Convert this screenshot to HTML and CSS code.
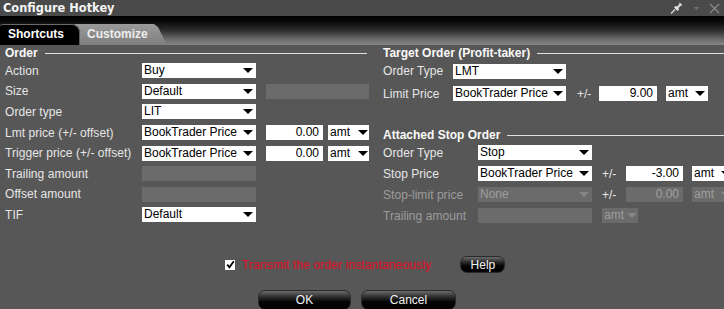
FILE: index.html
```html
<!DOCTYPE html>
<html>
<head>
<meta charset="utf-8">
<link rel="stylesheet" href="styles.css">
</head>
<body>
<div class="win">
  <div class="titlebar">
    <span class="title">Configure Hotkey</span>
    <div class="ctrls">
      <svg class="ic-pin" width="13" height="12" viewBox="0 0 13 12"><path d="M1 11.5 L5 7.5" stroke="#d8d8d8" stroke-width="1.4" fill="none"/><path d="M4 5.5 L7.5 9 L9 7.5 L8.5 6 L11 3.5 L12 3.8 L12.4 3.2 L9.8 0.6 L9.2 1 L9.5 2 L7 4.5 L5.5 4 Z" fill="#e0e0e0"/></svg>
      <svg class="ic-caret" width="7" height="5" viewBox="0 0 7 5"><path d="M0.5 1 L6.5 1 L3.5 4 Z" fill="#6e6e6e"/></svg>
      <svg class="ic-close" width="11" height="11" viewBox="0 0 11 11"><path d="M1 1 L10 10 M10 1 L1 10" stroke="#8a8a8a" stroke-width="1.3" fill="none"/></svg>
    </div>
  </div>
  <div class="tabband">
    <div class="tab tab-active">Shortcuts</div>
    <div class="tab tab-inactive">Customize</div>
  </div>
  <div class="main">
    <div class="col-left">
      <div class="heading"><span>Order</span><i class="rule"></i></div>
      <div class="grid-left">
        <div class="lbl">Action</div><div class="sel">Buy</div><div></div>
        <div class="lbl">Size</div><div class="sel">Default</div><div class="extra"><div class="dis w-size"></div></div>
        <div class="lbl">Order type</div><div class="sel">LIT</div><div></div>
        <div class="lbl">Lmt price (+/- offset)</div><div class="sel">BookTrader Price</div><div class="extra"><div class="num w-num">0.00</div><div class="sel w-amt">amt</div></div>
        <div class="lbl">Trigger price (+/- offset)</div><div class="sel">BookTrader Price</div><div class="extra"><div class="num w-num">0.00</div><div class="sel w-amt">amt</div></div>
        <div class="lbl">Trailing amount</div><div class="dis"></div><div></div>
        <div class="lbl">Offset amount</div><div class="dis"></div><div></div>
        <div class="lbl">TIF</div><div class="sel">Default</div><div></div>
      </div>
    </div>
    <div class="col-right">
      <div class="heading"><span>Target Order (Profit-taker)</span><i class="rule"></i></div>
      <div class="grid-target">
        <div class="lbl">Order Type</div><div class="sel">LMT</div><div></div><div></div><div></div>
        <div class="lbl">Limit Price</div><div class="sel">BookTrader Price</div><div class="pm pm-t">+/-</div><div class="num">9.00</div><div class="sel w-amt2">amt</div>
      </div>
      <div class="heading heading-stop"><span>Attached Stop Order</span><i class="rule"></i></div>
      <div class="grid-stop">
        <div class="lbl">Order Type</div><div class="sel">Stop</div><div></div><div></div><div></div>
        <div class="lbl">Stop Price</div><div class="sel">BookTrader Price</div><div class="pm">+/-</div><div class="num">-3.00</div><div class="sel w-amt2">amt</div>
        <div class="lbl lbl-dis">Stop-limit price</div><div class="sel sel-dis">None</div><div class="pm">+/-</div><div class="num num-dis">0.00</div><div class="sel sel-dis w-amt2">amt</div>
        <div class="lbl lbl-dis">Trailing amount</div><div class="dis"></div><div class="span2"><div class="sel sel-dis w-amt3">amt</div></div>
      </div>
    </div>
  </div>
  <div class="checkrow">
    <span class="chk"><svg width="9" height="9" viewBox="0 0 9 9"><path d="M1.2 4.6 L3.4 7.2 L7.8 1.2" stroke="#000" stroke-width="1.8" fill="none"/></svg></span>
    <span class="transmit">Transmit the order instantaneously</span>
    <button class="btn btn-help">Help</button>
  </div>
  <div class="btnrow">
    <button class="btn btn-ok">OK</button>
    <button class="btn btn-cancel">Cancel</button>
  </div>
</div>
</body>
</html>
```

FILE: styles.css
```css
* { box-sizing: border-box; }
html, body { margin: 0; padding: 0; }
body {
  width: 724px;
  height: 309px;
  overflow: hidden;
  background: #575757;
  font-family: "Liberation Sans", Arial, sans-serif;
  font-size: 12px;
  color: #e8e8e8;
}
.win { width: 724px; height: 309px; overflow: hidden; background: #575757; }

.titlebar {
  height: 16px;
  background: #4a4a4a;
  display: flex;
  align-items: center;
  justify-content: space-between;
  padding: 0 4px 0 3px;
}
.title {
  font-family: "DejaVu Sans", Verdana, sans-serif;
  font-weight: bold;
  font-size: 11.4px;
  color: #f4f4f4;
}
.ctrls { display: flex; align-items: center; gap: 0; }
.ic-pin { margin-right: 10px; }
.ic-caret { margin-right: 9px; }

.tabband {
  height: 29px;
  background: linear-gradient(to bottom, #000 0%, #0a0a0a 20%, #2e2e2e 50%, #6a6a6a 80%, #868686 100%);
  display: flex;
  align-items: flex-end;
}
.tab {
  height: 21px;
  font-weight: bold;
  font-size: 12px;
  line-height: 20px;
}
.tab-active {
  width: 80px;
  background: #000;
  color: #fff;
  padding-left: 8px;
  border-radius: 3px 8px 0 0;
  border-top: 1px solid #6a6a6a;
  border-right: 1px solid #5a5a5a;
  line-height: 19px;
  z-index: 2;
}
.tab-inactive {
  width: 93px;
  margin-left: -6px;
  padding-left: 13px;
  background: linear-gradient(to bottom, #9a9a9a, #7e7e7e);
  color: #eeeeee;
  clip-path: polygon(0 0, 80px 0, 84px 3px, 100% 100%, 0 100%);
  z-index: 1;
}

.main {
  display: flex;
  padding: 1px 0 0 5px;
  height: 180px;
}
.col-left { width: 364px; }
.col-right { flex: 1; margin-left: 14px; }

.heading {
  height: 14px;
  display: flex;
  align-items: center;
  font-weight: bold;
  color: #fafafa;
}
.rule {
  flex: 1;
  height: 1px;
  background: #e0e0e0;
  margin-left: 7px;
  margin-top: 1px;
}
.col-left .rule { margin-right: 2px; }
.heading-stop { margin-top: 23px; }

.grid-left {
  display: grid;
  grid-template-columns: 137px 114px 113px;
  grid-auto-rows: 20.6px;
  align-items: center;
  padding-top: 0.5px;
}
.grid-target {
  display: grid;
  grid-template-columns: 70px 113px 33px 58px 51px;
  grid-auto-rows: 22.5px;
  align-items: center;
}
.grid-stop {
  display: grid;
  grid-template-columns: 95px 114px 34px 57px 51px;
  grid-auto-rows: 21px;
  align-items: center;
}

.lbl { white-space: nowrap; color: #e6e6e6; letter-spacing: 0.05px; }
.lbl-dis { color: #9c9c9c; }

.sel {
  height: 15px;
  background: #fff;
  color: #000;
  display: flex;
  align-items: center;
  justify-content: space-between;
  padding: 0 3px 0 2px;
  white-space: nowrap;
  line-height: 15px;
}
.sel::after {
  content: "";
  flex: none;
  width: 0;
  height: 0;
  border-left: 5px solid transparent;
  border-right: 5px solid transparent;
  border-top: 5px solid #000;
}
.sel-dis { background: #6b6b6b; color: #9e9e9e; }
.sel-dis::after { border-top-color: #858585; }

.dis { height: 15px; background: #6b6b6b; }
.num {
  height: 15px;
  background: #fff;
  color: #000;
  text-align: right;
  padding-right: 4px;
  line-height: 15px;
}
.num-dis { background: #6b6b6b; color: #a2a2a2; }

.extra { display: flex; gap: 5px; margin-left: 10px; }
.w-size { width: 103px; }
.w-num { width: 57px; }
.w-amt { width: 41px; padding-right: 1px; }
.w-amt2 { width: 42px; margin-left: 9px; }
.w-amt3 { width: 36px; margin-left: 10px; padding-right: 1px; }
.span2 { grid-column: span 2; }

.pm { padding-left: 10px; color: #e6e6e6; }
.pm-t { padding-left: 11px; }

.checkrow {
  display: flex;
  align-items: center;
  height: 17px;
  margin-top: 31px;
  padding-left: 225px;
}
.chk {
  width: 10px;
  height: 10px;
  background: #fff;
  display: flex;
  align-items: center;
  justify-content: center;
  margin-right: 7px;
}
.transmit {
  color: #d0182c;
  letter-spacing: 0.15px;
  text-shadow: 0 0 1px rgba(210, 30, 50, 0.6);
}
.btn {
  font-family: "Liberation Sans", Arial, sans-serif;
  font-size: 12px;
  color: #f2f2f2;
  background: linear-gradient(to bottom, #6a6a6a 0%, #2a2a2a 35%, #050505 60%, #000 100%);
  border: 1px solid #2a2a2a;
  border-radius: 7px;
  padding: 0;
  margin: 0;
}
.btn-help { width: 45px; height: 17px; margin-left: 29px; }
.btnrow {
  display: flex;
  gap: 10px;
  padding-left: 258px;
  margin-top: 17px;
}
.btn-ok { width: 93px; height: 20px; }
.btn-cancel { width: 95px; height: 20px; }
```
